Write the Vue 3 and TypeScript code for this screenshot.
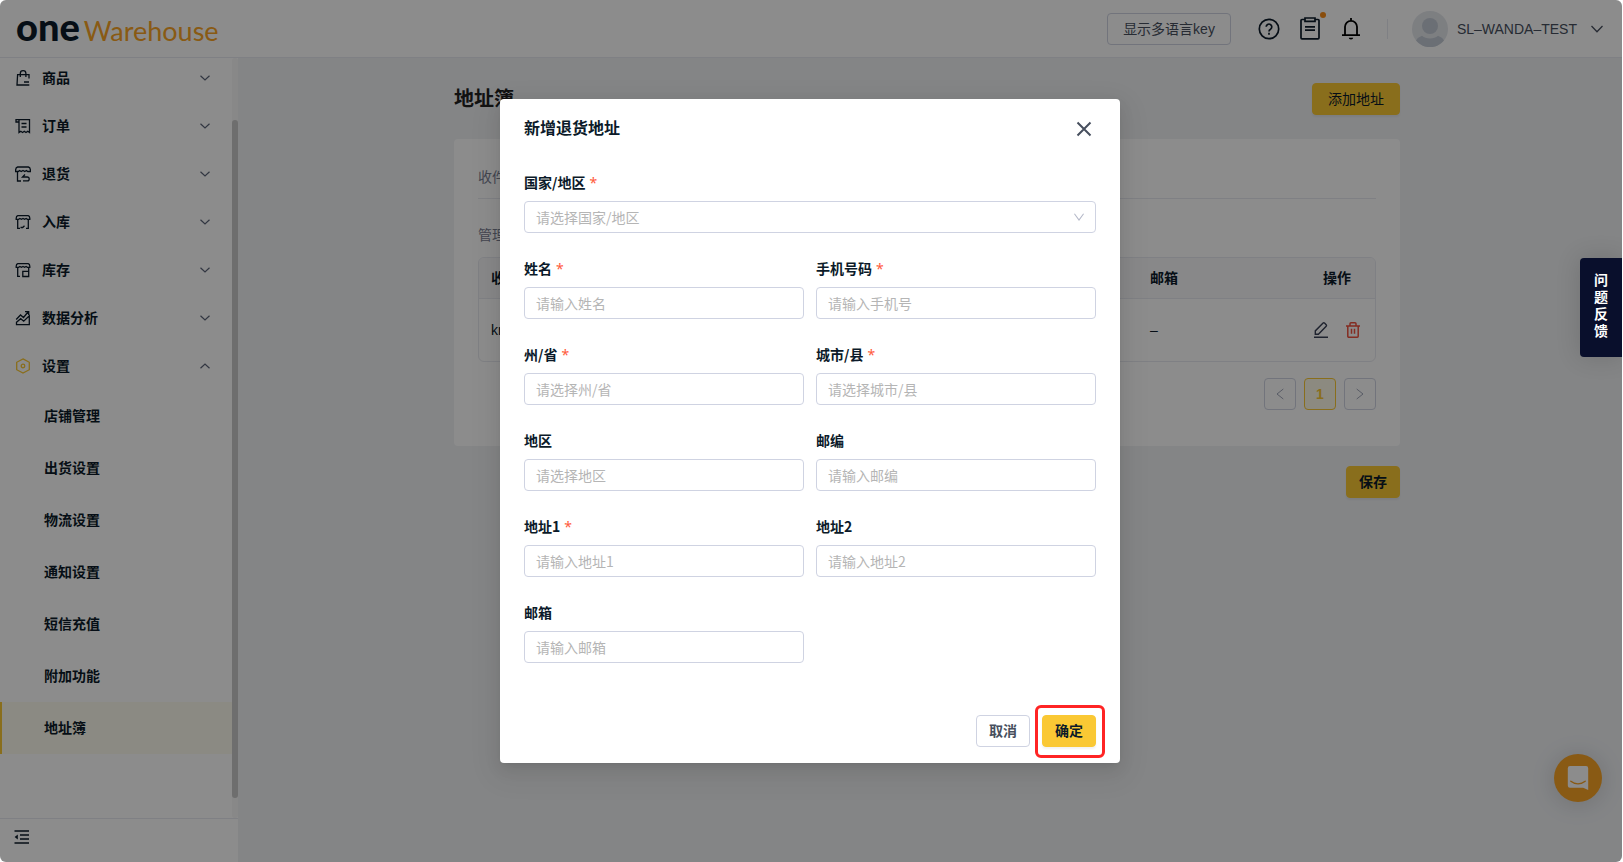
<script setup lang="ts">
import { ref } from 'vue'

interface Field {
  id: string
  label: string
  placeholder: string
  required: boolean
}

const menu = [
  { icon: 'bag', label: '商品' },
  { icon: 'order', label: '订单' },
  { icon: 'return', label: '退货' },
  { icon: 'inbound', label: '入库' },
  { icon: 'stock', label: '库存' },
  { icon: 'chart', label: '数据分析' },
  { icon: 'setting', label: '设置' },
]
const settings = ['店铺管理', '出货设置', '物流设置', '通知设置', '短信充值', '附加功能', '地址簿']
const fields: Field[] = [
  { id: 'name', label: '姓名', placeholder: '请输入姓名', required: true },
  { id: 'phone', label: '手机号码', placeholder: '请输入手机号', required: true },
  { id: 'province', label: '州/省', placeholder: '请选择州/省', required: true },
  { id: 'city', label: '城市/县', placeholder: '请选择城市/县', required: true },
  { id: 'district', label: '地区', placeholder: '请选择地区', required: false },
  { id: 'zip', label: '邮编', placeholder: '请输入邮编', required: false },
  { id: 'address1', label: '地址1', placeholder: '请输入地址1', required: true },
  { id: 'address2', label: '地址2', placeholder: '请输入地址2', required: false },
  { id: 'email', label: '邮箱', placeholder: '请输入邮箱', required: false },
]
const country = ref('')
const values = ref<Record<string, string>>({})
</script>

<template>
  <div class="app">
    <header class="topbar">
      <a class="logo" href="#"><span class="logo-one">one</span><span class="logo-name">Warehouse</span></a>
      <div class="tools">
        <button class="btn lang">显示多语言key</button>
        <button class="icon-btn help" aria-label="帮助">
          <svg width="22" height="22" viewBox="0 0 22 22" fill="none" stroke="currentColor" stroke-width="1.7">
            <circle cx="11" cy="11" r="9.7" />
            <path d="M8.2 8.8a2.8 2.8 0 1 1 4.3 2.4c-1 .6-1.5 1-1.5 2.2" />
            <path d="M11 14.8v1.9" />
          </svg>
        </button>
        <button class="icon-btn tasks" aria-label="任务">
          <svg width="20" height="23" viewBox="0 0 20 23" fill="none" stroke="currentColor" stroke-width="1.7">
            <path d="M5 2.5H2a1 1 0 0 0-1 1v17.3a1 1 0 0 0 1 1h16a1 1 0 0 0 1-1V3.500a1 1 0 0 0-1-1h-3" />
            <path d="M5 1h10v3.300H5zM5 9.900h10M5 13.200h10" />
          </svg>
          <i class="dot"></i>
        </button>
        <button class="icon-btn bell" aria-label="通知">
          <svg width="18" height="22" viewBox="0 0 18 22" fill="none" stroke="currentColor" stroke-width="1.8">
            <path d="M9 0v2.5M3 17.2V8.8a6 6 0 0 1 12 0v8.4M0 17.2h18" />
            <path d="M6.8 19.8a2.2 1.8 0 0 0 4.4 0z" fill="currentColor" stroke="none" />
          </svg>
        </button>
        <span class="divider"></span>
        <button class="user">
          <svg width="36" height="36" viewBox="0 0 36 36">
            <circle cx="18" cy="18" r="18" fill="#e4e7ec" />
            <circle cx="18" cy="15" r="8" fill="#c3cad5" />
            <path d="M4 29.5a14.5 8.5 0 0 1 6-4.7c4 3.6 12 3.6 16 0a14.5 8.5 0 0 1 6 4.7A18 18 0 0 1 4 29.5z" fill="#c3cad5" />
          </svg>
          <span class="user-name">SL–WANDA–TEST</span>
          <svg width="12" height="8" viewBox="0 0 12 8" fill="none" stroke="#474f5e" stroke-width="1.3"><path d="M.5 1 6 6.7 11.5 1" /></svg>
        </button>
      </div>
    </header>

    <div class="body">
      <aside class="sidebar">
        <div class="scroller">
          <nav class="nav">
            <a v-for="m in menu" :key="m.icon" class="nav-item" href="#">
              <svg class="nav-icon" :class="{ gold: m.icon === 'setting' }" width="16" height="16" viewBox="0 0 16 16" fill="none" stroke="currentColor" stroke-width="1.3">
                <template v-if="m.icon === 'bag'">
                  <path d="M14 8.5V4.7H2.6L2 15h12.3M9 12h5" />
                  <path d="M5.3 7V3.5a2.8 2.8 0 0 1 5.6 0V7" />
                </template>
                <template v-else-if="m.icon === 'order'">
                  <path d="M4 4H1V1.7h13.5V14.5l-1.8-1.2-1.7 1.2-1.7-1.2-1.7 1.2-1.8-1.2L4 14.5zM4 4V1.7M6.5 5.5h5M6.5 9h5" />
                </template>
                <template v-else-if="m.icon === 'return'">
                  <path d="M2.600 1h10.800q2 .4 2 3.300v1.200H12.800l-1.400-1-1.600 1-1.800-1-1.800 1-1.600-1-1.400 1H.6V4.300q0-2.900 2-3.300zM2.500 5.500V15H6" />
                  <path d="M7.500 11H12.300a1.900 1.900 0 0 1 0 3.800H8M10 8.500 7.500 11h3" />
                </template>
                <template v-else-if="m.icon === 'inbound'">
                  <path d="M2.800 1.600h10.400q1.600.4 1.600 2.700v1h-2.400l-1.300-.8-1.500.8-1.600-.8-1.600.8-1.500-.8-1.300.8H1.200v-1q0-2.300 1.600-2.700zM2.700 5.300v9H5M13.300 5.300v9H11M5.500 13.500h2.200l1.800-1.700" />
                </template>
                <template v-else-if="m.icon === 'stock'">
                  <path d="M2.800 1.600h10.400q1.600.4 1.600 2.700v1h-2.400l-1.300-.8-1.500.8-1.600-.8-1.600.8-1.500-.8-1.300.8H1.200v-1q0-2.300 1.600-2.700zM2.700 5.300v9H5M13.700 5.300v9.200H7.800V9.300h5.700" />
                </template>
                <template v-else-if="m.icon === 'chart'">
                  <path d="M1.200 9.5 5.5 5l3 2.500L13 2M10 1.700h3.700V5" />
                  <path d="M1.500 12.300 5.700 8.700l3 2.500 5.600-5.500v8.900H1.500z" />
                </template>
                <template v-else>
                  <path d="M8 .9 14.3 4.300v7.400L8 15.100l-6.300-3.400V4.300z" />
                  <circle cx="8" cy="8" r="1.800" />
                </template>
              </svg>
              <span class="nav-label">{{ m.label }}</span>
              <svg class="nav-arrow" width="10" height="6" viewBox="0 0 10 6" fill="none" stroke="#5c6478" stroke-width="1.2">
                <path :d="m.icon === 'setting' ? 'M.5 5.2 5 1l4.5 4.2' : 'M.5.8 5 5 9.5.8'" />
              </svg>
            </a>
            <a v-for="s in settings" :key="s" class="sub-item" :class="{ active: s === '地址簿' }" href="#">{{ s }}</a>
          </nav>
          <div class="track"><div class="thumb"></div></div>
        </div>
        <div class="side-foot">
          <button class="icon-btn" aria-label="收起菜单">
            <svg width="16" height="14" viewBox="0 0 16 14" fill="none" stroke="currentColor" stroke-width="1.3">
              <path d="M.5 1h14.5M6 5h9M6 9h9M.5 13h14.5" />
              <path d="M3.8 4.400v5L.6 7z" fill="currentColor" stroke="none" />
            </svg>
          </button>
        </div>
      </aside>

      <main class="main">
        <div class="content">
          <div class="page-head">
            <h1>地址簿</h1>
            <button class="btn primary wide">添加地址</button>
          </div>
          <section class="card">
            <p class="section-tab">收件地址</p>
            <p class="section-note">管理收件地址</p>
            <div class="table-box">
              <table>
                <thead>
                  <tr><th>收件人</th><th class="col-mail">邮箱</th><th class="col-act">操作</th></tr>
                </thead>
                <tbody>
                  <tr>
                    <td>kn</td>
                    <td>–</td>
                    <td class="acts">
                      <div class="act-row">
                        <button class="icon-btn" aria-label="编辑">
                          <svg width="16" height="18" viewBox="0 0 16 18" fill="none" stroke="#3a4056" stroke-width="1.4">
                            <path d="M2.300 13.200V9.900l7.800-7.800a1 1 0 0 1 1.400 0l1.700 1.700a1 1 0 0 1 0 1.400l-7.800 8zM1 16.300h14" />
                          </svg>
                        </button>
                        <button class="icon-btn" aria-label="删除">
                          <svg width="16" height="18" viewBox="0 0 16 18" fill="none" stroke="#f0503c" stroke-width="1.5">
                            <path d="M1 5h14M2.800 5v10.200a1 1 0 0 0 1 1h8.400a1 1 0 0 0 1-1V5M5 5V2.700a1 1 0 0 1 1-1h4a1 1 0 0 1 1 1V5M6.500 7.700v5M9.500 7.700v5" />
                          </svg>
                        </button>
                      </div>
                    </td>
                  </tr>
                </tbody>
              </table>
            </div>
            <div class="pager">
              <button class="page" aria-label="上一页"><svg width="8" height="12" viewBox="0 0 8 12" fill="none" stroke="currentColor"><path d="M7.300 1 1 6l6.300 5" /></svg></button>
              <button class="page current">1</button>
              <button class="page" aria-label="下一页"><svg width="8" height="12" viewBox="0 0 8 12" fill="none" stroke="currentColor"><path d="M.7 1 7 6 .7 11" /></svg></button>
            </div>
          </section>
          <div class="save-row"><button class="btn primary strong">保存</button></div>
        </div>
      </main>
    </div>

    <button class="chat" aria-label="在线客服">
      <svg width="24" height="26" viewBox="0 0 24 26">
        <path d="M4 1h16a2.200 2.200 0 0 1 2.200 2.200V25l-5-2.300H4a2.200 2.200 0 0 1-2.200-2.200V3.200A2.200 2.200 0 0 1 4 1z" fill="#fff" />
        <path d="M4.800 16.300c4.200 3.400 10.200 3.400 14.400 0" fill="none" stroke="#f9a426" stroke-width="1.4" stroke-linecap="round" />
      </svg>
    </button>

    <div class="mask">
      <div class="modal" role="dialog" aria-labelledby="modal-title">
        <div class="modal-head">
          <h2 id="modal-title">新增退货地址</h2>
          <button class="icon-btn" aria-label="关闭">
            <svg width="24" height="24" viewBox="0 0 24 24" fill="none" stroke="#474f5e" stroke-width="2"><path d="m5.500 5.500 13 13m0-13-13 13" /></svg>
          </button>
        </div>
        <form id="address-form" class="form" @submit.prevent>
          <div class="field full">
            <label for="country">国家/地区<span class="star">*</span></label>
            <div class="select-box">
              <select id="country" v-model="country" class="control">
                <option value="" disabled>请选择国家/地区</option>
                <option value="CN">中国</option>
              </select>
              <svg width="10" height="8" viewBox="0 0 10 8" fill="none" stroke="#b4b8c8" stroke-width="1.1"><path d="M.4.7 5 7 9.600.7" /></svg>
            </div>
          </div>
          <div v-for="f in fields" :key="f.id" class="field">
            <label :for="f.id">{{ f.label }}<span v-if="f.required" class="star">*</span></label>
            <input :id="f.id" v-model="values[f.id]" class="control" type="text" :placeholder="f.placeholder" />
          </div>
        </form>
        <div class="modal-foot">
          <button class="btn strong">取消</button>
          <span class="ok-wrap"><button class="btn primary strong" type="submit" form="address-form">确定</button><i class="highlight"></i></span>
        </div>
      </div>
    </div>

    <button class="feedback">问题反馈</button>
  </div>
</template>

<style>
html,
body,
#app {
  height: 100%;
}
body {
  margin: 0;
  background: #fff;
}
</style>

<style scoped>
* {
  box-sizing: border-box;
}
.app {
  position: relative;
  display: flex;
  flex-direction: column;
  height: 100%;
  margin-right: 1px;
  overflow: hidden;
  border-radius: 6px;
  background: #f0f2f5;
  color: #0b1a29;
  font: 14px/22px 'Liberation Sans', 'Noto Sans CJK SC', sans-serif;
}
button,
input,
select {
  margin: 0;
  font: inherit;
  color: inherit;
}
h1,
h2,
p {
  margin: 0;
}
a {
  color: inherit;
  text-decoration: none;
}
svg {
  display: block;
  flex: none;
}
.icon-btn {
  display: flex;
  padding: 0;
  border: 0;
  background: none;
}
.btn {
  height: 32px;
  padding: 0 12px;
  border: 1px solid #cfd3e2;
  border-radius: 4px;
  background: #fff;
  color: #474f5e;
  line-height: 22px;
}
.wide,
.lang {
  padding: 0 15px;
}
.strong {
  font-weight: 700;
}
.primary {
  border-color: #fac834;
  background: #fac834;
  color: #0b1a29;
  box-shadow: 0 2px 2px rgba(0, 0, 0, 0.05);
}

.topbar {
  display: flex;
  flex: none;
  align-items: center;
  justify-content: space-between;
  height: 58px;
  padding: 0 19px 0 16px;
  border-bottom: 1px solid #e8eaf0;
  background: #fff;
}
.logo {
  display: flex;
  align-items: baseline;
  gap: 4px;
  font-family: Lato, 'Liberation Sans', sans-serif;
  line-height: 40px;
}
.logo-one {
  color: #0b1a29;
  font-size: 38px;
  font-weight: 900;
}
.logo-name {
  color: #f9a426;
  font-size: 27px;
}
.tools {
  display: flex;
  align-items: center;
}
.help {
  margin-left: 27px;
}
.tasks {
  position: relative;
  margin-left: 20px;
}
.dot {
  position: absolute;
  top: -5px;
  right: -6px;
  width: 6px;
  height: 6px;
  border-radius: 50%;
  background: #fa8c16;
}
.bell {
  margin-left: 22px;
  color: #000;
}
.divider {
  width: 1px;
  height: 20px;
  margin: 0 24px 0 27px;
  background: #e8eaf0;
}
.user {
  display: flex;
  align-items: center;
  padding: 0;
  border: 0;
  background: none;
  color: #474f5e;
}
.user-name {
  margin: 0 14px 0 9px;
}

.body {
  display: flex;
  flex: 1;
  min-height: 0;
}
.sidebar {
  display: flex;
  flex: none;
  flex-direction: column;
  width: 238px;
  background: #fff;
}
.scroller {
  display: flex;
  flex: 1;
  min-height: 0;
  overflow: hidden;
}
.nav {
  flex: 1;
  margin-top: -4px;
  font-weight: 700;
}
.nav-item {
  display: flex;
  align-items: center;
  height: 48px;
  padding: 0 22px 0 15px;
}
.nav-icon.gold {
  color: #fac834;
}
.nav-label {
  flex: 1;
  margin-left: 11px;
}
.sub-item {
  display: flex;
  align-items: center;
  height: 52px;
  padding-left: 44px;
}
.sub-item.active {
  background: #fdfbee;
  box-shadow: inset 2px 0 #fac834;
}
.track {
  display: flex;
  flex: none;
  flex-direction: column;
  width: 6px;
  padding: 62px 0 20px;
  border-radius: 3px;
  background: #f7f7f7;
}
.thumb {
  flex: 1;
  border-radius: 3px;
  background: #c9c9c9;
}
.side-foot {
  display: flex;
  align-items: center;
  height: 44px;
  padding: 0 14px 8px;
  border-top: 1px solid #e8eaf0;
}

.main {
  flex: 1;
  min-width: 0;
  padding: 25px 30px 0 24px;
}
.content {
  max-width: 946px;
  margin: 0 auto;
}
.page-head {
  display: flex;
  align-items: center;
  justify-content: space-between;
}
h1 {
  font-size: 20px;
  font-weight: 700;
  line-height: 32px;
  color: #222;
}
.card {
  margin-top: 24px;
  padding: 24px;
  border-radius: 4px;
  background: #fff;
}
.section-tab {
  padding-bottom: 7px;
  border-bottom: 1px solid #e8eaf0;
  color: #7a8093;
  line-height: 28px;
}
.section-note {
  margin: 24px 0 10px;
  color: #7a8093;
  line-height: 24px;
}
.table-box {
  overflow: hidden;
  border: 1px solid #e8eaf0;
  border-radius: 6px;
}
table {
  width: 100%;
  border-collapse: separate;
  border-spacing: 0;
  table-layout: fixed;
}
th,
td {
  padding: 0 12px;
  text-align: left;
}
th {
  height: 41px;
  border-bottom: 1px solid #e8eaf0;
  background: #f7f7fa;
  font-weight: 700;
}
td {
  height: 62px;
}
.col-mail {
  width: 136px;
}
.col-act {
  width: 101px;
  padding-right: 24px;
  text-align: right;
}
.act-row {
  display: flex;
  justify-content: flex-end;
  gap: 16px;
  padding-right: 2px;
}
.pager {
  display: flex;
  justify-content: flex-end;
  gap: 8px;
  margin: 16px 0 12px;
}
.page {
  display: flex;
  align-items: center;
  justify-content: center;
  width: 32px;
  height: 32px;
  padding: 0;
  border: 1px solid #cfd3e2;
  border-radius: 4px;
  background: #fff;
  color: #a0a5b8;
}
.page.current {
  border-color: #fac834;
  background: #fffbea;
  color: #fac834;
  font-weight: 700;
}
.save-row {
  display: flex;
  justify-content: flex-end;
  margin-top: 20px;
}

.chat {
  position: absolute;
  right: 20px;
  bottom: 60px;
  display: flex;
  align-items: center;
  justify-content: center;
  width: 48px;
  height: 48px;
  padding: 0;
  border: 0;
  border-radius: 50%;
  background: #f9a426;
  box-shadow: 0 2px 24px rgba(0, 0, 0, 0.15);
}
.mask {
  position: absolute;
  inset: 0;
  display: flex;
  align-items: center;
  justify-content: center;
  padding-right: 2px;
  background: rgba(0, 0, 0, 0.45);
}
.modal {
  width: 620px;
  border-radius: 4px;
  background: #fff;
  box-shadow: 0 3px 6px -4px rgba(0, 0, 0, 0.12), 0 6px 16px rgba(0, 0, 0, 0.08), 0 9px 28px 8px rgba(0, 0, 0, 0.05);
}
.modal-head {
  display: flex;
  align-items: center;
  justify-content: space-between;
  height: 60px;
  padding: 0 24px;
}
h2 {
  font-size: 16px;
  font-weight: 700;
  line-height: 24px;
}
.form {
  display: grid;
  grid-template-columns: 1fr 1fr;
  gap: 24px 12px;
  padding: 12px 24px 36px;
  font-family: 'Noto Sans CJK SC', sans-serif;
}
.field {
  display: flex;
  flex-direction: column;
  gap: 8px;
}
.full {
  grid-column: 1 / -1;
}
label {
  height: 22px;
  font-weight: 700;
}
.star {
  margin-left: 4px;
  color: #ff5a3c;
  font-family: 'Noto Sans', sans-serif;
  font-weight: 400;
}
.control {
  width: 100%;
  height: 32px;
  padding: 0 11px;
  border: 1px solid #cfd3e2;
  border-radius: 4px;
  background: #fff;
  appearance: none;
  outline: none;
}
select.control {
  color: #b5b5b5;
}
.control::placeholder {
  color: #b5b5b5;
  opacity: 1;
}
.select-box {
  position: relative;
}
.select-box svg {
  position: absolute;
  top: 12px;
  right: 12px;
  pointer-events: none;
}
.modal-foot {
  display: flex;
  justify-content: flex-end;
  gap: 12px;
  padding: 16px 24px;
}
.ok-wrap {
  position: relative;
  display: flex;
}
.highlight {
  position: absolute;
  inset: -10px -9px -11px -7px;
  border: 3px solid #ff2424;
  border-radius: 6px;
  pointer-events: none;
}
.feedback {
  position: absolute;
  top: 258px;
  right: 0;
  width: 42px;
  padding: 14px 14px 17px;
  border: 0;
  border-radius: 4px 0 0 4px;
  background: #090f2c;
  color: #fff;
  font-weight: 700;
  line-height: 17px;
  box-shadow: 0 0 24px rgba(0, 0, 0, 0.15);
}
</style>
